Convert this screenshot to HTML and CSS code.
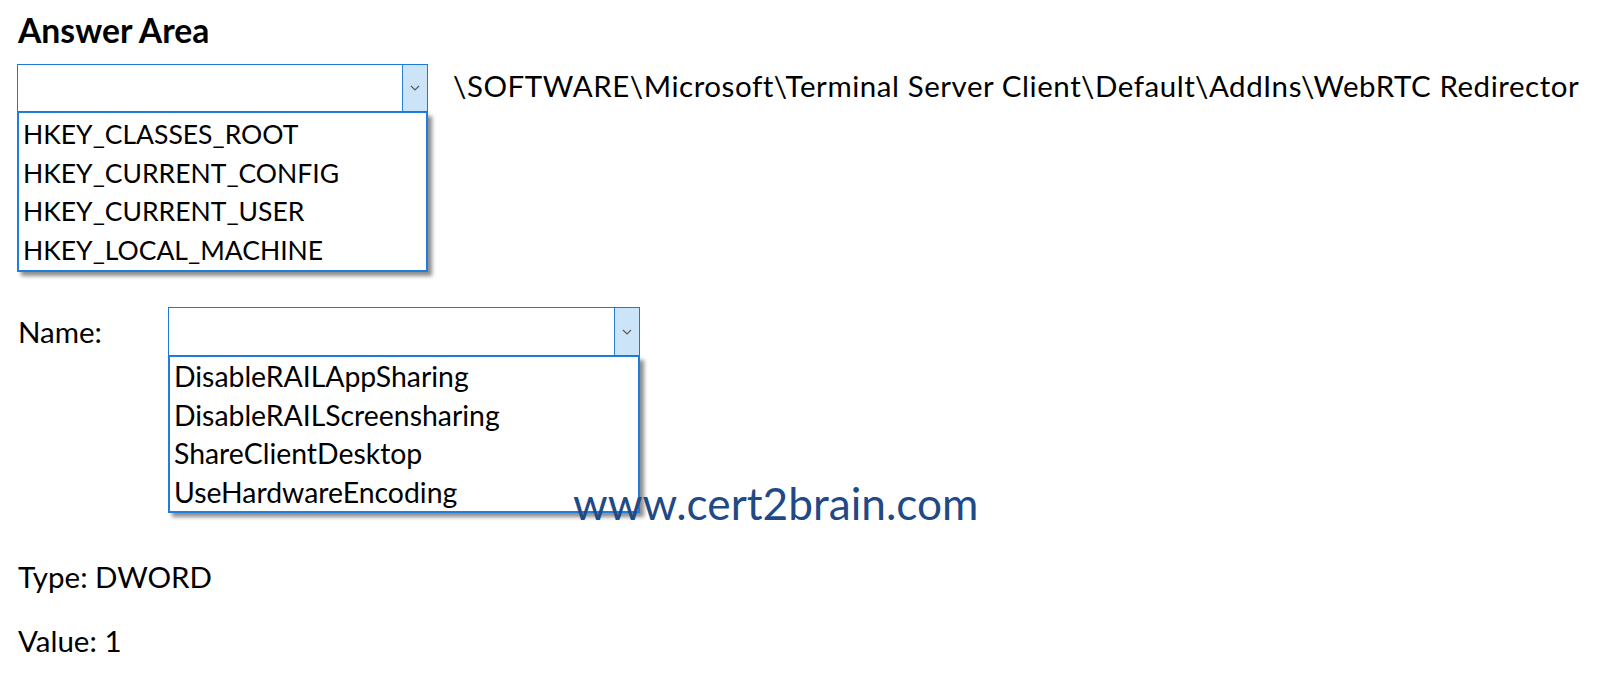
FILE: index.html
```html
<!DOCTYPE html>
<html lang="en">
<head>
<meta charset="utf-8">
<title>Answer Area</title>
<link rel="stylesheet" href="styles.css">
</head>
<body>
<div class="page">
  <h1 class="title">Answer Area</h1>

  <div class="row row-key">
    <div class="combo combo-key">
      <div class="select">
        <span class="field"></span>
        <span class="arrow"><svg width="10" height="6" viewBox="0 0 10 6"><polyline points="1,1 5,5 9,1" fill="none" stroke="#5a5a5a" stroke-width="1.2"/></svg></span>
      </div>
      <ul class="list list-key">
        <li>HKEY_CLASSES_ROOT</li>
        <li>HKEY_CURRENT_CONFIG</li>
        <li>HKEY_CURRENT_USER</li>
        <li>HKEY_LOCAL_MACHINE</li>
      </ul>
    </div>
    <div class="path">\SOFTWARE\Microsoft\Terminal Server Client\Default\AddIns\WebRTC Redirector</div>
  </div>

  <div class="row row-name">
    <div class="label">Name:</div>
    <div class="combo combo-name">
      <div class="select">
        <span class="field"></span>
        <span class="arrow"><svg width="10" height="6" viewBox="0 0 10 6"><polyline points="1,1 5,5 9,1" fill="none" stroke="#5a5a5a" stroke-width="1.2"/></svg></span>
      </div>
      <ul class="list list-name">
        <li>DisableRAILAppSharing</li>
        <li>DisableRAILScreensharing</li>
        <li>ShareClientDesktop</li>
        <li>UseHardwareEncoding</li>
      </ul>
    </div>
  </div>

  <p class="line line-type">Type: DWORD</p>
  <p class="line line-value">Value: 1</p>

  <div class="watermark">www.cert2brain.com</div>
</div>
</body>
</html>
```
FILE: styles.css
```css
html, body {
  margin: 0;
  padding: 0;
  background: #ffffff;
}

body {
  font-family: "Lato", "Open Sans", sans-serif;
  color: #000000;
  font-size: 29.5px;
}

.page {
  position: relative;
  width: 1600px;
  height: 683px;
  padding-left: 17px;
  box-sizing: border-box;
  overflow: hidden;
}

.title {
  margin: 10px 0 0 1px;
  font-size: 33.7px;
  font-weight: 700;
  line-height: 40px;
  height: 40px;
}

.row {
  display: flex;
  align-items: flex-start;
}

.row-key {
  margin-top: 14px;
}

.row-name {
  margin-top: 35px;
}

.combo {
  position: relative;
  z-index: 1;
}

.combo-key {
  width: 411px;
}

.combo-name {
  width: 472px;
}

.select {
  display: flex;
  height: 48px;
  border: 1px solid #1c7ad6;
  box-sizing: border-box;
  background: #ffffff;
}

.combo-name .select {
  height: 49px;
}

.field {
  flex: 1;
}

.arrow {
  width: 24px;
  display: flex;
  align-items: center;
  justify-content: center;
  background: #cce4f7;
  border-left: 1px solid #2a80d6;
}

.list {
  list-style: none;
  margin: 0;
  padding: 2px 0 1px 4px;
  border: 2px solid #1f7ddb;
  border-top-width: 1px;
  background: #ffffff;
  box-shadow: 4px 4px 4px rgba(0, 0, 0, 0.45);
}

.list li {
  line-height: 38.5px;
  white-space: nowrap;
}

.list-key li {
  font-size: 26.5px;
}

.list-name {
  padding-top: 0;
  padding-bottom: 0;
}

.list-name li {
  font-size: 28.4px;
}

.path {
  margin-left: 25px;
  line-height: 44px;
  font-size: 29.5px;
  letter-spacing: 0.55px;
  white-space: nowrap;
}

.label {
  width: 150px;
  padding-left: 1px;
  line-height: 49px;
  font-size: 29.5px;
}

.line {
  margin: 0;
  padding-left: 1px;
  line-height: 40px;
  font-size: 29.5px;
}

.line-type {
  margin-top: 44px;
}

.line-value {
  margin-top: 24px;
}

.watermark {
  position: absolute;
  left: 573px;
  top: 481px;
  z-index: 2;
  font-size: 44.2px;
  line-height: 44px;
  color: #1f4a86;
  white-space: nowrap;
}
```
